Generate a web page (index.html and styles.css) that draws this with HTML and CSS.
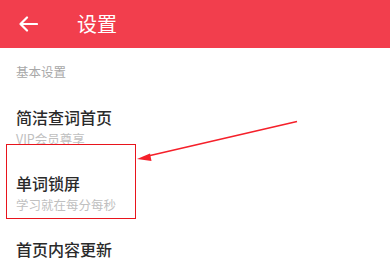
FILE: index.html
```html
<!DOCTYPE html>
<html>
<head>
  <meta charset="utf-8">
  <title>设置</title>
  <link rel="stylesheet" href="styles.css">
</head>
<body>
  <div class="page">
    <div class="top-bar">
      <svg class="back-icon" width="20" height="16" viewBox="0 0 20 16">
        <path d="M19 8H2.5M9 1.5L2.5 8L9 14.5" fill="none" stroke="#fff" stroke-width="2.2" stroke-linecap="round" stroke-linejoin="round"/>
      </svg>
      <span class="top-title">设置</span>
    </div>

    <div class="section-title">基本设置</div>

    <div class="setting-item">
      <div class="item-title">简洁查词首页</div>
      <div class="item-sub">VIP会员尊享</div>
    </div>
    <div class="setting-item">
      <div class="item-title">单词锁屏</div>
      <div class="item-sub">学习就在每分每秒</div>
    </div>
    <div class="setting-item">
      <div class="item-title">首页内容更新</div>
    </div>

    <!-- annotation -->
    <div class="mark-box"></div>
    <svg class="mark-arrow" width="390" height="260" viewBox="0 0 390 260">
      <line x1="297" y1="121.5" x2="148" y2="156" stroke="#f5202a" stroke-width="1.6"/>
      <polygon points="137,159 150,153.5 151.5,161" fill="#f5202a"/>
    </svg>
  </div>
</body>
</html>
```

FILE: styles.css
```css
body {
  margin: 0;
  padding: 0;
  background-color: #fff;
  font-family: "Noto Sans CJK SC", "Noto Sans", sans-serif;
}

.page {
  position: relative;
  width: 390px;
  height: 260px;
  overflow: hidden;
}

.top-bar {
  display: flex;
  align-items: center;
  height: 48px;
  background-color: #f23e4d;
  color: #fff;
}

.back-icon {
  margin-left: 18px;
}

.top-title {
  margin-left: 39px;
  font-size: 20px;
  line-height: 24px;
}

.section-title {
  padding: 16px 16px 13px;
  font-size: 12.5px;
  line-height: 16px;
  color: #a8a8a8;
}

.setting-item {
  padding: 14px 16px 12px;
}

.item-title {
  font-size: 16px;
  font-weight: 500;
  line-height: 20px;
  color: #2a2a2a;
}

.item-sub {
  margin-top: 4px;
  font-size: 12.5px;
  line-height: 16px;
  color: #c0c0c0;
}

.mark-box {
  position: absolute;
  left: 6px;
  top: 144px;
  width: 128px;
  height: 73px;
  border: 1px solid #e8141c;
}

.mark-arrow {
  position: absolute;
  left: 0;
  top: 0;
}
```
